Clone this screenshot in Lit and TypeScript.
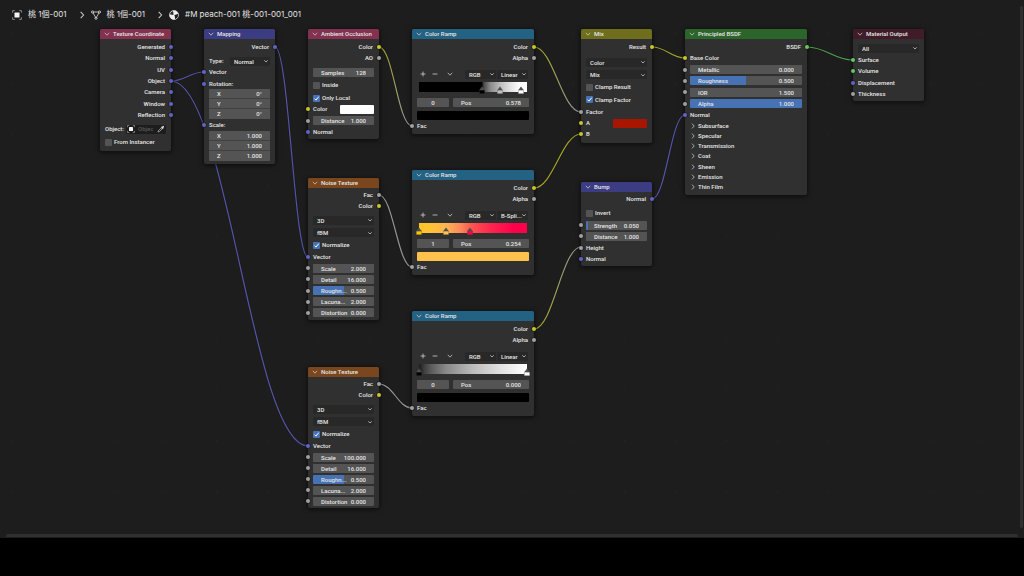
import { LitElement, html, css, svg, nothing, TemplateResult } from "lit";
import { customElement, property } from "lit/decorators.js";
import { classMap } from "lit/directives/class-map.js";
import { styleMap } from "lit/directives/style-map.js";

type Socket = "vector" | "color" | "value" | "shader";

interface Stop {
  at: number;
  color: string;
}

type Row =
  | { kind: "out"; label: string; socket: Socket }
  | { kind: "in"; label: string; socket?: Socket; swatch?: string }
  | { kind: "num"; label: string; value: string; socket?: Socket; fill?: number }
  | { kind: "vec"; label: string; values: string[] }
  | { kind: "menu"; label: string; value: string; caption?: boolean }
  | { kind: "check"; label: string; on: boolean }
  | { kind: "object"; label: string }
  | { kind: "tools"; mode: string; interpolation: string }
  | { kind: "ramp"; gradient: string; stops: Stop[] }
  | { kind: "stop"; index: string; pos: string }
  | { kind: "fill"; color: string }
  | { kind: "panel"; label: string };

/* A block spreads its rows evenly over its height. */
interface Block {
  gap: number;
  height?: number;
  rows: Row[];
}

interface NodeData {
  title: string;
  tone: string;
  x: number;
  y: number;
  wide?: boolean;
  foot: number;
  blocks: Block[];
}

const SOCKET_COLORS: Record<Socket, string> = {
  vector: "#6363c7",
  color: "#c7c729",
  value: "#a1a1a1",
  shader: "#63c763",
};

const LINK_COLORS: Record<Socket, string> = {
  vector: "#5353a6",
  color: "#a3a32a",
  value: "#939393",
  shader: "#4fa04f",
};

const out = (label: string, socket: Socket): Row => ({ kind: "out", label, socket });
const inp = (label: string, socket?: Socket, swatch?: string): Row => ({ kind: "in", label, socket, swatch });
const num = (label: string, value: string, socket?: Socket, fill?: number): Row => ({ kind: "num", label, value, socket, fill });
const check = (label: string, on: boolean): Row => ({ kind: "check", label, on });
const menu = (label: string, value: string, caption = false): Row => ({ kind: "menu", label, value, caption });

const ramp = (
  x: number,
  y: number,
  interpolation: string,
  gradient: string,
  stops: Stop[],
  index: string,
  pos: string,
  color: string
): NodeData => ({
  title: "Color Ramp",
  tone: "converter",
  x,
  y,
  wide: true,
  foot: 3,
  blocks: [
    { gap: 3, height: 21, rows: [out("Color", "color"), out("Alpha", "value")] },
    { gap: 6, rows: [{ kind: "tools", mode: "RGB", interpolation }] },
    { gap: 3, rows: [{ kind: "ramp", gradient, stops }] },
    { gap: 3, rows: [{ kind: "stop", index, pos }] },
    { gap: 3, rows: [{ kind: "fill", color }] },
    { gap: 1, rows: [inp("Fac", "value")] },
  ],
});

const noise = (x: number, y: number, scale: string, height: number): NodeData => ({
  title: "Noise Texture",
  tone: "texture",
  x,
  y,
  foot: 2,
  blocks: [
    { gap: 2, height: 21, rows: [out("Fac", "value"), out("Color", "color")] },
    { gap: 4, height: 35, rows: [menu("Dimensions", "3D"), menu("Type", "fBM"), check("Normalize", true)] },
    {
      gap: 2,
      height,
      rows: [
        inp("Vector", "vector"),
        num("Scale", scale, "value"),
        num("Detail", "16.000", "value"),
        num("Roughn...", "0.500", "value", 50),
        num("Lacuna...", "2.000", "value"),
        num("Distortion", "0.000", "value"),
      ],
    },
  ],
});

const NODES: NodeData[] = [
  {
    title: "Texture Coordinate", tone: "input", x: 100, y: 29, foot: 4,
    blocks: [
      {
        gap: 3, height: 78,
        rows: ["Generated", "Normal", "UV", "Object", "Camera", "Window", "Reflection"].map((l) => out(l, "vector")),
      },
      { gap: 4, height: 23, rows: [{ kind: "object", label: "Object:" }, check("From Instancer", false)] },
    ],
  },
  {
    title: "Mapping", tone: "vector", x: 204, y: 29, foot: 3,
    blocks: [
      { gap: 3, rows: [out("Vector", "vector")] },
      { gap: 4, rows: [menu("Type:", "Normal", true)] },
      { gap: 1, height: 22, rows: [inp("Vector", "vector"), inp("Rotation:", "vector")] },
      { gap: 0, rows: [{ kind: "vec", label: "Rotation", values: ["0°", "0°", "0°"] }] },
      { gap: 1, rows: [inp("Scale:", "vector")] },
      { gap: 1, rows: [{ kind: "vec", label: "Scale", values: ["1.000", "1.000", "1.000"] }] },
    ],
  },
  {
    title: "Ambient Occlusion", tone: "input", x: 308, y: 29, foot: 2,
    blocks: [
      { gap: 3, height: 21, rows: [out("Color", "color"), out("AO", "value")] },
      { gap: 4, rows: [num("Samples", "128")] },
      { gap: 3, height: 23, rows: [check("Inside", false), check("Only Local", true)] },
      { gap: 1, height: 33, rows: [inp("Color", "color", "#ffffff"), num("Distance", "1.000", "value"), inp("Normal", "vector")] },
    ],
  },
  ramp(
    412, 29, "Linear",
    "#000 58%, #4a4a4a 60%, #8a8a8a 66%, #bcbcbc 75%, #e6e6e6 86%, #fff 94%",
    [{ at: 58, color: "#000000" }, { at: 75, color: "#bdbdbd" }, { at: 94, color: "#ffffff" }],
    "0", "0.578", "#000000"
  ),
  noise(308, 178, "2.000", 66),
  ramp(
    412, 170, "B-Spli...",
    "#ffc61f 0%, #ffc233 10%, #ffb450 25%, #ff8a5a 38%, #ff5050 50%, #ff264e 66%, #ff004a 88%",
    [{ at: 0, color: "#ffc400" }, { at: 25, color: "#ffc24d" }, { at: 47, color: "#ff0044" }],
    "1", "0.254", "#ffc24d"
  ),
  noise(308, 367, "100.000", 65),
  ramp(
    412, 311, "Linear",
    "#1c1c1c 0%, #3f3f3f 5%, #5b5b5b 11%, #898989 25%, #bcbcbc 50%, #e1e1e1 75%, #fff 100%",
    [{ at: 0, color: "#000000" }, { at: 100, color: "#ffffff" }],
    "0", "0.000", "#000000"
  ),
  {
    title: "Mix", tone: "color", x: 581, y: 29, foot: 4,
    blocks: [
      { gap: 3, rows: [out("Result", "color")] },
      {
        gap: 5, height: 48,
        rows: [menu("Data type", "Color"), menu("Blending mode", "Mix"), check("Clamp Result", false), check("Clamp Factor", true)],
      },
      { gap: 2, height: 32, rows: [inp("Factor", "value"), inp("A", "color", "#a81500"), inp("B", "color")] },
    ],
  },
  {
    title: "Bump", tone: "vector", x: 581, y: 182, foot: 2,
    blocks: [
      { gap: 2, rows: [out("Normal", "vector")] },
      { gap: 4, rows: [check("Invert", false)] },
      {
        gap: 2, height: 44,
        rows: [num("Strength", "0.050", "value", 4), num("Distance", "1.000", "value"), inp("Height", "value"), inp("Normal", "vector")],
      },
    ],
  },
  {
    title: "Principled BSDF", tone: "shader", x: 685, y: 29, wide: true, foot: 3,
    blocks: [
      {
        gap: 3, height: 78,
        rows: [
          out("BSDF", "shader"),
          inp("Base Color", "color"),
          num("Metallic", "0.000", "value"),
          num("Roughness", "0.500", "value", 50),
          num("IOR", "1.500", "value"),
          num("Alpha", "1.000", "value", 100),
          inp("Normal", "vector"),
        ],
      },
      {
        gap: 1, height: 71,
        rows: ["Subsurface", "Specular", "Transmission", "Coat", "Sheen", "Emission", "Thin Film"].map(
          (label): Row => ({ kind: "panel", label })
        ),
      },
    ],
  },
  {
    title: "Material Output", tone: "output", x: 853, y: 29, foot: 2,
    blocks: [
      { gap: 4, rows: [menu("Target", "All")] },
      {
        gap: 2, height: 44,
        rows: [inp("Surface", "shader"), inp("Volume", "shader"), inp("Displacement", "vector"), inp("Thickness", "value")],
      },
    ],
  },
];

interface Link {
  from: [number, number];
  to: [number, number];
  a: Socket;
  b: Socket;
}

const LINKS: Link[] = [
  { from: [171, 81], to: [204, 72], a: "vector", b: "vector" },
  { from: [171, 81], to: [308, 446], a: "vector", b: "vector" },
  { from: [275, 47], to: [308, 257], a: "vector", b: "vector" },
  { from: [379, 47], to: [412, 126], a: "color", b: "value" },
  { from: [379, 195], to: [412, 267], a: "value", b: "value" },
  { from: [379, 384], to: [412, 408], a: "value", b: "value" },
  { from: [534, 47], to: [581, 112], a: "color", b: "value" },
  { from: [534, 188], to: [581, 134], a: "color", b: "color" },
  { from: [534, 329], to: [581, 247], a: "color", b: "value" },
  { from: [652, 47], to: [685, 58], a: "color", b: "color" },
  { from: [652, 199], to: [685, 115], a: "vector", b: "vector" },
  { from: [807, 47], to: [853, 60], a: "shader", b: "shader" },
];

const chevronDown = html`<svg class="chev" viewBox="0 0 6 6" aria-hidden="true"><path d="M.8 1.8 3 4.2 5.2 1.8" /></svg>`;
const chevronMenu = html`<svg class="chev" viewBox="0 0 6 6" aria-hidden="true"><path d="M1.300 2.300 3 4 4.700 2.300" /></svg>`;
const chevronRight = html`<svg class="chev" viewBox="0 0 6 6" aria-hidden="true"><path d="M2 .6 4.2 3 2 5.4" /></svg>`;

const objectIcon = html`<svg class="icon" viewBox="0 0 16 16" aria-hidden="true">
  <rect x="4" y="4" width="8" height="8" rx="1" fill="#f4f4f4" />
  <path d="M1 4.5V1h3.5M11.5 1H15v3.5M15 11.5V15h-3.5M4.5 15H1v-3.5" fill="none" stroke="#a0a0a0" stroke-width="1.3" />
</svg>`;

const meshIcon = html`<svg class="icon" viewBox="0 0 16 16" aria-hidden="true">
  <path d="M2.5 3.2h11M2.5 3.2 8 13M13.5 3.2 8 13" fill="none" stroke="#dcdcdc" stroke-width="1.3" />
  <g fill="#1d1d1d" stroke="#e6e6e6" stroke-width="1.3">
    <circle cx="2.4" cy="3.2" r="1.7" /><circle cx="13.6" cy="3.2" r="1.7" /><circle cx="8" cy="13.2" r="1.7" />
  </g>
</svg>`;

const materialIcon = html`<svg class="icon" viewBox="0 0 16 16" aria-hidden="true">
  <circle cx="8" cy="8" r="7.2" fill="#f0f0f0" />
  <path d="M8.600 7.800c2.400-.2 4.600-.9 6.200-2.200A7.200 7.200 0 0 1 9.500 15 14 14 0 0 0 8.600 7.800Z" fill="#1d1d1d" />
  <path d="M6.200 1.100C4 1.700 1.700 3.600 1 6.800c1.900.8 4 1.100 6.200 1.100C7.200 5.400 7 3 6.200 1.100Z" fill="#303030" />
  <circle cx="8" cy="8" r="7.200" fill="none" stroke="#f0f0f0" stroke-width="1" />
</svg>`;

const pickerIcon = html`<svg class="icon" viewBox="0 0 16 16" aria-hidden="true">
  <path d="M2 14c.2-1.500.5-2.200 1.400-3.200l5-5 1.900 1.900-5 5C4.300 13.600 3.500 13.900 2 14Z" fill="none" stroke="#cfcfcf" stroke-width="1.300" />
  <path d="M7.600 4.200 9 3l1 .9 1.500-1.800c1.300-1.300 3.600.9 2.400 2.300L12.100 6l.9 1-1.300 1.400Z" fill="#e0e0e0" />
</svg>`;

const tick = html`<svg class="tick" viewBox="0 0 7 7" aria-hidden="true"><path d="M1.500 3.600 3 5.100 5.700 1.700" /></svg>`;

const base = css`
  * {
    box-sizing: border-box;
  }
  .chev {
    width: 6px;
    height: 6px;
    flex: none;
    fill: none;
    stroke: #c8c8c8;
    stroke-width: 0.8;
  }
  button,
  select,
  input {
    font: inherit;
    color: inherit;
    margin: 0;
    padding: 0;
    border: 0;
    background: none;
    min-width: 0;
    border-radius: 0;
    outline: none;
  }
`;

@customElement("shader-node")
export class ShaderNode extends LitElement {
  @property({ attribute: false }) node!: NodeData;

  static styles = [
    base,
    css`
      :host {
        display: block;
        color: #e6e6e6;
        font-size: 6px;
        font-weight: 500;
        line-height: 10px;
      }
      .node {
        width: 71px;
        background: #303030;
        border-radius: 2px;
        box-shadow: 0 1px 4px 1px rgba(0, 0, 0, 0.5);
      }
      .wide {
        width: 122px;
      }
      .head {
        display: flex;
        align-items: center;
        gap: 3px;
        width: 100%;
        height: 10px;
        padding-left: 4px;
        border-radius: 2px 2px 0 0;
        white-space: nowrap;
      }
      .input { background: #83314f; }
      .vector { background: #3c3c83; }
      .converter { background: #246283; }
      .texture { background: #79461d; }
      .color { background: #6e6e1d; }
      .shader { background: #2b652b; }
      .output { background: #3f1c27; }
      .block {
        display: flex;
        flex-direction: column;
        justify-content: space-between;
      }
      .row {
        position: relative;
        display: flex;
        align-items: center;
        height: 10px;
        padding: 0 5px;
        white-space: nowrap;
      }
      .out {
        justify-content: flex-end;
        padding-right: 6px;
      }
      .between {
        justify-content: space-between;
      }
      .dot {
        position: absolute;
        left: -2px;
        top: 3px;
        width: 4px;
        height: 4px;
        border-radius: 50%;
        box-shadow: 0 0 0 1px rgba(20, 20, 20, 0.35);
      }
      .out .dot {
        left: auto;
        right: -2px;
      }
      .num {
        display: flex;
        flex: 1;
        align-items: center;
        min-width: 0;
        height: 9px;
        line-height: 9px;
        padding: 0 8px;
        border-radius: 1px;
        background: #545454;
      }
      .num input {
        flex: 1;
        width: 0;
        height: 9px;
        text-align: right;
      }
      .num .mid {
        text-align: center;
      }
      .vec {
        margin: 0 5px;
        border-radius: 1px;
        overflow: hidden;
      }
      .vec .num {
        height: 10px;
        border-radius: 0;
        border-bottom: 1px solid #404040;
      }
      .vec .num:last-child {
        border-bottom-color: #545454;
      }
      .menu {
        flex: 1;
        display: grid;
        grid-template-columns: 1fr 6px 1px;
        align-items: center;
        min-width: 0;
        height: 9px;
        border-radius: 1px;
        background: #282828;
      }
      .menu select {
        grid-area: 1 / 1 / 2 / 4;
        width: 100%;
        height: 9px;
        line-height: 9px;
        padding-left: 4px;
        appearance: none;
      }
      .menu .chev {
        grid-area: 1 / 2;
        pointer-events: none;
      }
      .captioned {
        display: grid;
        grid-template-columns: 21px 1fr;
      }
      .check {
        display: flex;
        align-items: center;
        gap: 2px;
      }
      .box {
        display: grid;
        width: 7px;
        height: 7px;
      }
      .box input {
        grid-area: 1 / 1;
        appearance: none;
        width: 7px;
        height: 7px;
        border-radius: 1px;
        background: #545454;
      }
      .box input:checked {
        background: #4772b3;
      }
      .tick {
        grid-area: 1 / 1;
        z-index: 1;
        width: 7px;
        height: 7px;
        fill: none;
        stroke: #fff;
        pointer-events: none;
      }
      .swatch {
        appearance: none;
        width: 34px;
        height: 9px;
        border-radius: 1px;
        overflow: hidden;
      }
      .full {
        width: 100%;
      }
      .swatch::-webkit-color-swatch-wrapper {
        padding: 0;
      }
      .swatch::-webkit-color-swatch {
        border: 0;
      }
      .object {
        display: grid;
        grid-template-columns: 21px 1fr;
      }
      .picker {
        display: grid;
        grid-template-columns: 8px 1fr 8px;
        align-items: center;
        gap: 3px;
        height: 9px;
        padding: 0 1px;
        border-radius: 1px;
        background: #1d1d1d;
      }
      .picker input {
        width: 100%;
        height: 9px;
      }
      .picker input::placeholder {
        color: #585858;
      }
      .picker button {
        display: grid;
      }
      .icon {
        width: 8px;
        height: 8px;
      }
      .tools {
        display: grid;
        grid-template-columns: 12px 12px 18px 1fr 32px 32px;
      }
      .tools button {
        display: grid;
        place-items: center;
        height: 10px;
      }
      .tools .menu {
        border-right: 1px solid #303030;
      }
      .tools .menu:nth-child(4) {
        grid-column: 5;
      }
      .glyph {
        width: 6px;
        height: 6px;
        fill: none;
        stroke: #d0d0d0;
        stroke-width: 0.8;
      }
      .ramp {
        position: relative;
        height: 12px;
        margin: 0 7px;
      }
      .bar {
        height: 10px;
      }
      .marker {
        position: absolute;
        top: 4px;
        width: 6px;
        height: 8px;
        margin-left: -3px;
      }
      .stop {
        display: grid;
        grid-template-columns: 32px 1fr;
        gap: 4px;
      }
      .panel {
        display: flex;
        align-items: center;
        gap: 2px;
      }
    `,
  ];

  private dot(socket?: Socket) {
    return socket ? html`<span class="dot" style=${styleMap({ background: SOCKET_COLORS[socket] })}></span>` : nothing;
  }

  private field(label: string, value: string, fill?: number) {
    const style = fill ? { background: `linear-gradient(90deg, #4772b3 ${fill}%, #545454 ${fill}%)` } : {};
    return html`<label class="num" style=${styleMap(style)}><span>${label}</span><input .value=${value} size="1" /></label>`;
  }

  private menu(label: string, value: string) {
    return html`<span class="menu">
      <select aria-label=${label}><option>${value}</option></select>${chevronMenu}
    </span>`;
  }

  private row(r: Row): TemplateResult {
    switch (r.kind) {
      case "out":
        return html`<div class="row out">${r.label}${this.dot(r.socket)}</div>`;
      case "in":
        return r.swatch
          ? html`<label class="row between">${r.label}<input class="swatch" type="color" .value=${r.swatch} />${this.dot(r.socket)}</label>`
          : html`<div class="row">${r.label}${this.dot(r.socket)}</div>`;
      case "num":
        return html`<div class="row">${this.field(r.label, r.value, r.fill)}${this.dot(r.socket)}</div>`;
      case "vec":
        return html`<div class="vec" role="group" aria-label=${r.label}>
          ${r.values.map((v, i) => this.field("XYZ"[i], v))}
        </div>`;
      case "menu":
        return r.caption
          ? html`<div class="row captioned"><span>${r.label}</span>${this.menu(r.label, r.value)}</div>`
          : html`<div class="row">${this.menu(r.label, r.value)}</div>`;
      case "check":
        return html`<div class="row">
          <label class="check">
            <span class="box"><input type="checkbox" .checked=${r.on} />${r.on ? tick : nothing}</span>${r.label}
          </label>
        </div>`;
      case "object":
        return html`<div class="row object">
          <label for="object">${r.label}</label>
          <span class="picker">
            ${objectIcon}<input id="object" placeholder="Objec" size="1" />
            <button aria-label="Eyedropper">${pickerIcon}</button>
          </span>
        </div>`;
      case "tools":
        return html`<div class="row tools">
          <button aria-label="Add stop"><svg class="glyph" viewBox="0 0 6 6"><path d="M3 .6v4.800M.6 3h4.800" /></svg></button>
          <button aria-label="Remove stop"><svg class="glyph" viewBox="0 0 6 6"><path d="M.6 3h4.800" /></svg></button>
          <button aria-label="Tools">${chevronDown}</button>
          ${this.menu("Color mode", r.mode)}${this.menu("Interpolation", r.interpolation)}
        </div>`;
      case "ramp":
        return html`<div class="ramp">
          <div class="bar" style=${styleMap({ background: `linear-gradient(90deg, ${r.gradient})` })}></div>
          ${r.stops.map(
            (s) => html`<svg class="marker" viewBox="0 0 6 8" style=${styleMap({ left: `${s.at}%` })}>
              <path d="M0 4.600 3 .6l3 4Z" fill="#505050" />
              <path d="M.3 4.200h5.400v3.500H.3Z" fill=${s.color} stroke="#444" stroke-width=".3" />
            </svg>`
          )}
        </div>`;
      case "stop":
        return html`<div class="row stop">
          <span class="num"><input class="mid" aria-label="Active stop" .value=${r.index} size="1" /></span>
          ${this.field("Pos", r.pos)}
        </div>`;
      case "fill":
        return html`<div class="row"><input class="swatch full" type="color" aria-label="Stop color" .value=${r.color} /></div>`;
      case "panel":
        return html`<div class="row"><button class="panel">${chevronRight}${r.label}</button></div>`;
    }
  }

  render() {
    const n = this.node;
    return html`<section class=${classMap({ node: true, wide: !!n.wide })} style=${styleMap({ "padding-bottom": `${n.foot}px` })}>
      <button class="head ${n.tone}">${chevronDown}<span>${n.title}</span></button>
      ${n.blocks.map(
        (b) => html`<div
          class="block"
          style=${styleMap({ "margin-top": `${b.gap}px`, ...(b.height ? { height: `${b.height}px` } : {}) })}
        >
          ${b.rows.map((r) => this.row(r))}
        </div>`
      )}
    </section>`;
  }
}

@customElement("app-root")
export class AppRoot extends LitElement {
  static styles = [
    base,
    css`
      :host {
        display: flex;
        flex-direction: column;
        height: 100vh;
        background: #000;
        font-family: Roboto, "Noto Sans CJK JP", sans-serif;
        overflow: hidden;
      }
      .editor {
        position: relative;
        flex: 1;
        display: grid;
        grid-template: auto 1fr 3px / 1fr 3px;
        column-gap: 2px;
        padding: 6px 1px 1px 6px;
        background: #1d1d1d radial-gradient(circle, #212121 1px, transparent 1px) -13px 7px / 51px 51px;
      }
      .foot {
        height: 38px;
      }
      .path {
        display: flex;
        align-items: center;
        height: 17px;
        padding-left: 6px;
        color: #e4e4e4;
        font-family: Inter, "Noto Sans CJK JP", sans-serif;
        font-size: 8px;
        line-height: 17px;
        white-space: nowrap;
      }
      .path a {
        display: flex;
        align-items: center;
        gap: 6px;
        color: inherit;
        text-decoration: none;
      }
      .path .icon {
        width: 10px;
        height: 10px;
      }
      .path .chev {
        width: 10px;
        height: 8px;
        margin: 0 4px 0 10px;
      }
      .links {
        position: absolute;
        inset: 0;
        width: 100%;
        height: 100%;
        fill: none;
      }
      .shade {
        stroke: #161616;
        stroke-width: 2.4;
        opacity: 0.5;
      }
      .wire {
        stroke-width: 1.2;
      }
      .place {
        position: absolute;
      }
      .vbar {
        grid-area: 1 / 2 / 3 / 3;
        margin-bottom: 6px;
        border-radius: 2px;
        background: #303030;
      }
      .hbar {
        grid-area: 3 / 1;
        border-radius: 2px;
        background: #303030;
      }
    `,
  ];

  private link(l: Link, i: number) {
    const [x1, y1] = l.from;
    const [x2, y2] = l.to;
    const h = Math.round((x2 - x1) * 0.41);
    const d = `M${x1} ${y1}C${x1 + h} ${y1} ${x2 - h} ${y2} ${x2} ${y2}`;
    return svg`
      <linearGradient id="g${i}" gradientUnits="userSpaceOnUse" x1=${x1} y1=${y1} x2=${x2} y2=${y2}>
        <stop offset="0" stop-color=${LINK_COLORS[l.a]} /><stop offset="1" stop-color=${LINK_COLORS[l.b]} />
      </linearGradient>
      <path class="shade" d=${d} />
      <path class="wire" d=${d} stroke="url(#g${i})" />`;
  }

  render() {
    return html`
      <main class="editor">
        <nav class="path" aria-label="Data path">
          <a href="#object">${objectIcon}<span>桃 1個-001</span></a>
          ${chevronRight}
          <a href="#mesh">${meshIcon}<span>桃 1個-001</span></a>
          ${chevronRight}
          <a href="#material">${materialIcon}<span>#M peach-001 桃-001-001_001</span></a>
        </nav>
        <div class="vbar"></div>
        <div class="hbar"></div>
        <svg class="links" aria-hidden="true">${LINKS.map((l, i) => this.link(l, i))}</svg>
        ${NODES.map(
          (n) => html`<shader-node class="place" .node=${n} style=${styleMap({ left: `${n.x}px`, top: `${n.y}px` })}></shader-node>`
        )}
      </main>
      <div class="foot"></div>
    `;
  }
}
